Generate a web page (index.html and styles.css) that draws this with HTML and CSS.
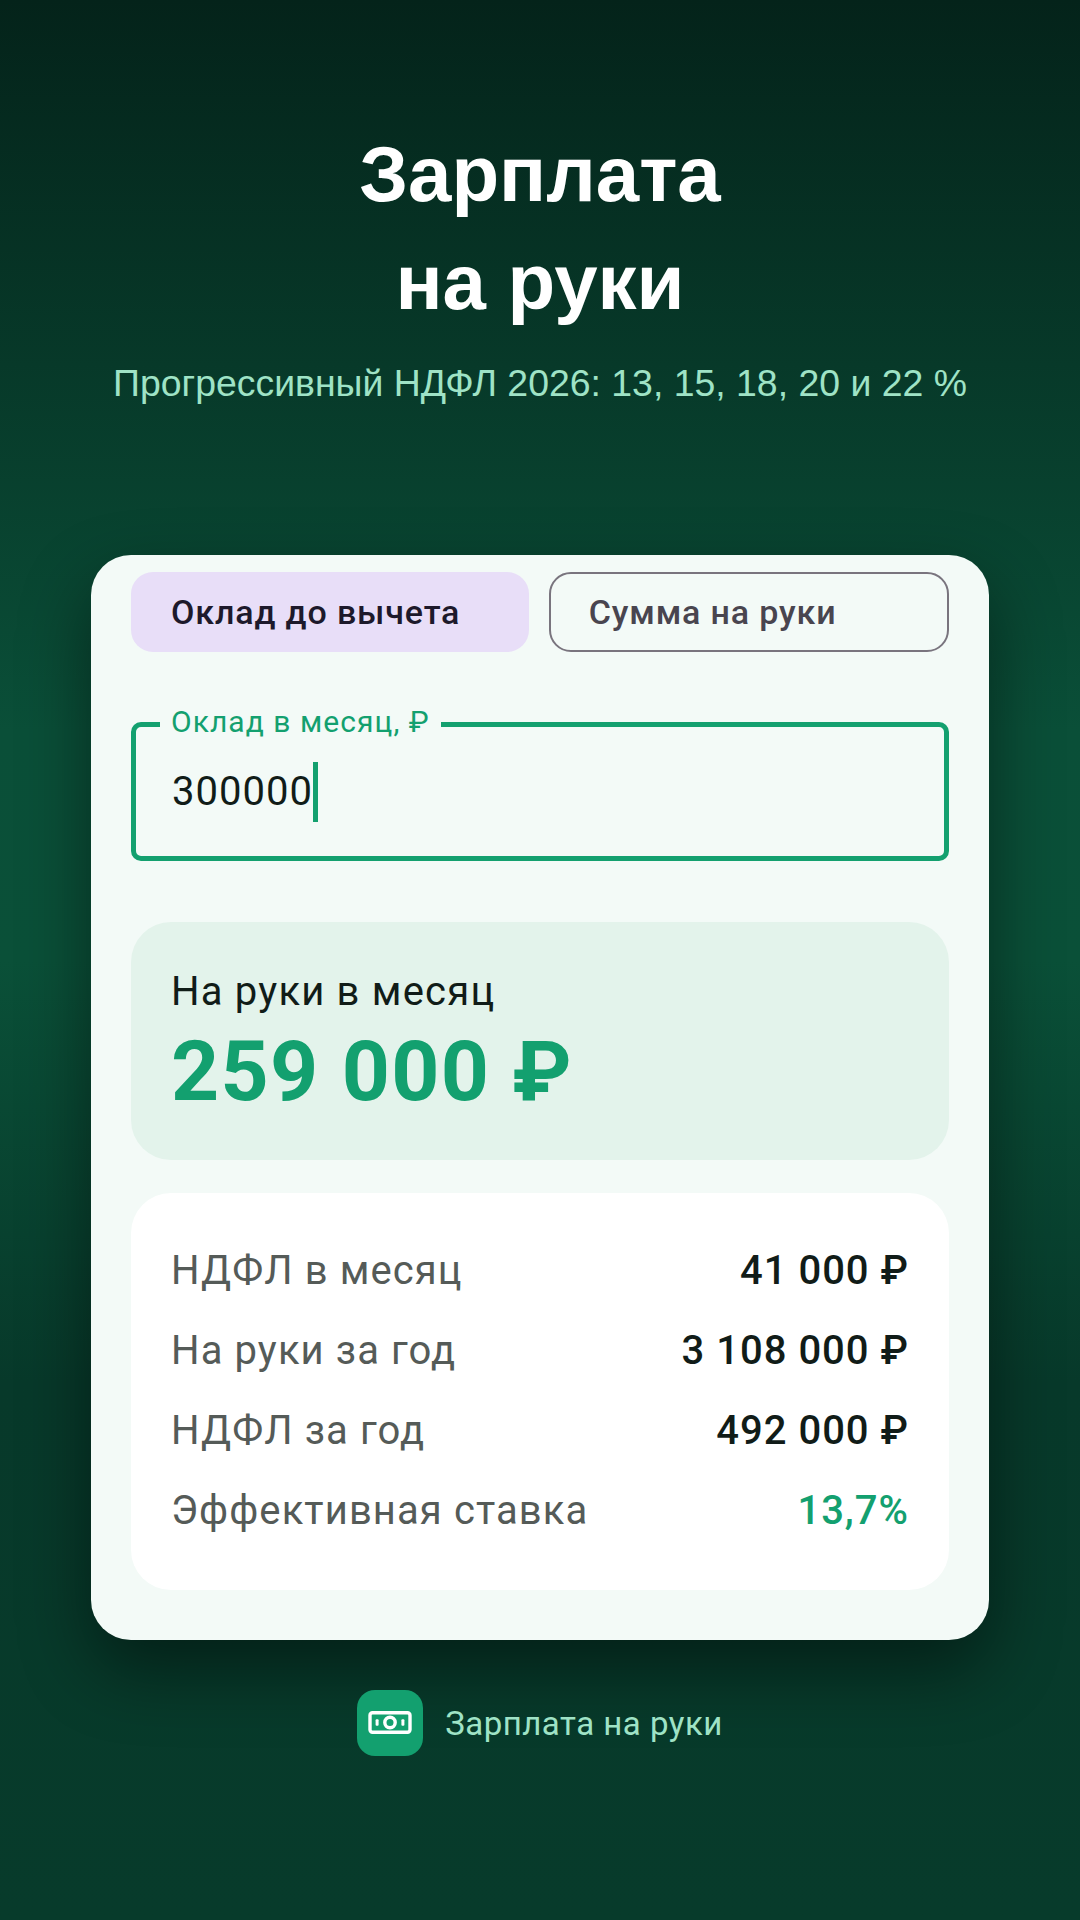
FILE: index.html
```html
<!DOCTYPE html>
<html lang="ru">
<head>
<meta charset="utf-8">
<title>Зарплата на руки</title>
<link rel="stylesheet" href="styles.css">
</head>
<body>
<main class="screen">
  <header class="hero">
    <h1 class="title">Зарплата<br>на руки</h1>
    <p class="subtitle">Прогрессивный НДФЛ 2026: 13, 15, 18, 20 и 22 %</p>
  </header>
  <section class="card">
    <div class="tabs">
      <div class="tab tab-active">Оклад до вычета</div>
      <div class="tab tab-idle">Сумма на руки</div>
    </div>
    <div class="field">
      <span class="field-label">Оклад в месяц, ₽</span>
      <span class="field-value">300000</span><span class="caret"></span>
    </div>
    <div class="result">
      <div class="result-label">На руки в месяц</div>
      <div class="result-value">259 000 ₽</div>
    </div>
    <div class="stats">
      <div class="row"><span class="row-name">НДФЛ в месяц</span><span class="row-val">41 000 ₽</span></div>
      <div class="row"><span class="row-name">На руки за год</span><span class="row-val">3 108 000 ₽</span></div>
      <div class="row"><span class="row-name">НДФЛ за год</span><span class="row-val">492 000 ₽</span></div>
      <div class="row"><span class="row-name">Эффективная ставка</span><span class="row-val row-accent">13,7%</span></div>
    </div>
  </section>
  <footer class="brand">
    <div class="brand-icon">
      <svg width="44" height="44" viewBox="0 0 44 44" fill="none">
        <rect x="2" y="11.7" width="40" height="19.6" rx="2.5" stroke="#fff" stroke-width="3.4"/>
        <circle cx="22" cy="21.5" r="5.2" stroke="#fff" stroke-width="3.4"/>
        <rect x="7.6" y="18.2" width="3" height="6.6" rx="1" fill="#fff"/>
        <rect x="33.4" y="18.2" width="3" height="6.6" rx="1" fill="#fff"/>
      </svg>
    </div>
    <span class="brand-name">Зарплата на руки</span>
  </footer>
</main>
</body>
</html>
```
FILE: styles.css
```css
* { box-sizing: border-box; }
html, body { margin: 0; padding: 0; }
body { width: 1080px; height: 1920px; overflow: hidden; background: #06382a; }
.screen {
  width: 1080px;
  height: 1920px;
  display: flex;
  flex-direction: column;
  align-items: center;
  padding-top: 120px;
  background:
    linear-gradient(180deg, #04231a 0%, #0a4f38 38%, #0a5038 50%, #07392a 72%, #073b2b 100%);
}
.hero { text-align: center; height: 435px; }
.title {
  margin: 0;
  font: 700 78px/108px "Liberation Sans", Arial, sans-serif;
  color: #fff;
}
.subtitle {
  margin: 23px 0 0;
  font: 400 37.4px/48px "Liberation Sans", Arial, sans-serif;
  color: #9fe3c6;
}
.card {
  width: 898px;
  height: 1085px;
  padding: 17px 40px 0;
  background: #f3faf7;
  border-radius: 40px;
  box-shadow: 0 30px 70px rgba(0,0,0,.45);
  font-family: Roboto, sans-serif;
}
.tabs { display: flex; gap: 20px; }
.tab {
  flex: 1;
  height: 80px;
  display: flex;
  align-items: center;
  padding-left: 40px;
  border-radius: 22px;
  font-size: 34px;
  font-weight: 500;
  letter-spacing: .85px;
}
.tab-active { background: #e8def8; color: #1d192b; }
.tab-idle { border: 2.5px solid #79747e; color: #49454f; padding-left: 37.5px; }
.field {
  position: relative;
  margin-top: 70px;
  height: 139px;
  padding: 35px 0 0 36px;
  border: 5px solid #13a06f;
  border-radius: 10px;
  display: flex;
  align-items: flex-start;
}
.field-label {
  position: absolute;
  left: 24px;
  top: -23px;
  padding: 0 11px;
  background: #f3faf7;
  font-size: 30px;
  line-height: 36px;
  letter-spacing: 1.05px;
  color: #13a06f;
}
.field-value { font-size: 40px; line-height: 56px; letter-spacing: 1px; color: #111c18; margin-top: 2px; }
.caret { width: 5px; height: 60px; background: #13a06f; }
.result {
  margin-top: 61px;
  height: 238px;
  padding: 46px 40px 0;
  background: #e3f3eb;
  border-radius: 40px;
}
.result-label { font-size: 40px; line-height: 48px; letter-spacing: 1.2px; color: #111c18; }
.result-value { font-size: 84px; line-height: 92px; font-weight: 700; letter-spacing: 1.3px; color: #13a06f; margin-top: 10px; }
.stats {
  margin-top: 33px;
  height: 397px;
  padding: 53px 40px 0;
  background: #fff;
  border-radius: 40px;
  display: flex;
  flex-direction: column;
  gap: 32px;
}
.row { display: flex; justify-content: space-between; align-items: center; height: 48px; }
.row-name { font-size: 40px; letter-spacing: 1.1px; color: #555b58; }
.row-val { font-size: 40px; font-weight: 500; letter-spacing: 1px; color: #111c18; }
.row-accent { color: #13a06f; }
.brand { display: flex; align-items: center; gap: 22px; margin-top: 50px; }
.brand-icon {
  width: 66px;
  height: 66px;
  border-radius: 18px;
  background: #13a06f;
  display: flex;
  align-items: center;
  justify-content: center;
}
.brand-name { font-family: Roboto, sans-serif; font-size: 33px; letter-spacing: .5px; color: #9fe3c6; }
```
